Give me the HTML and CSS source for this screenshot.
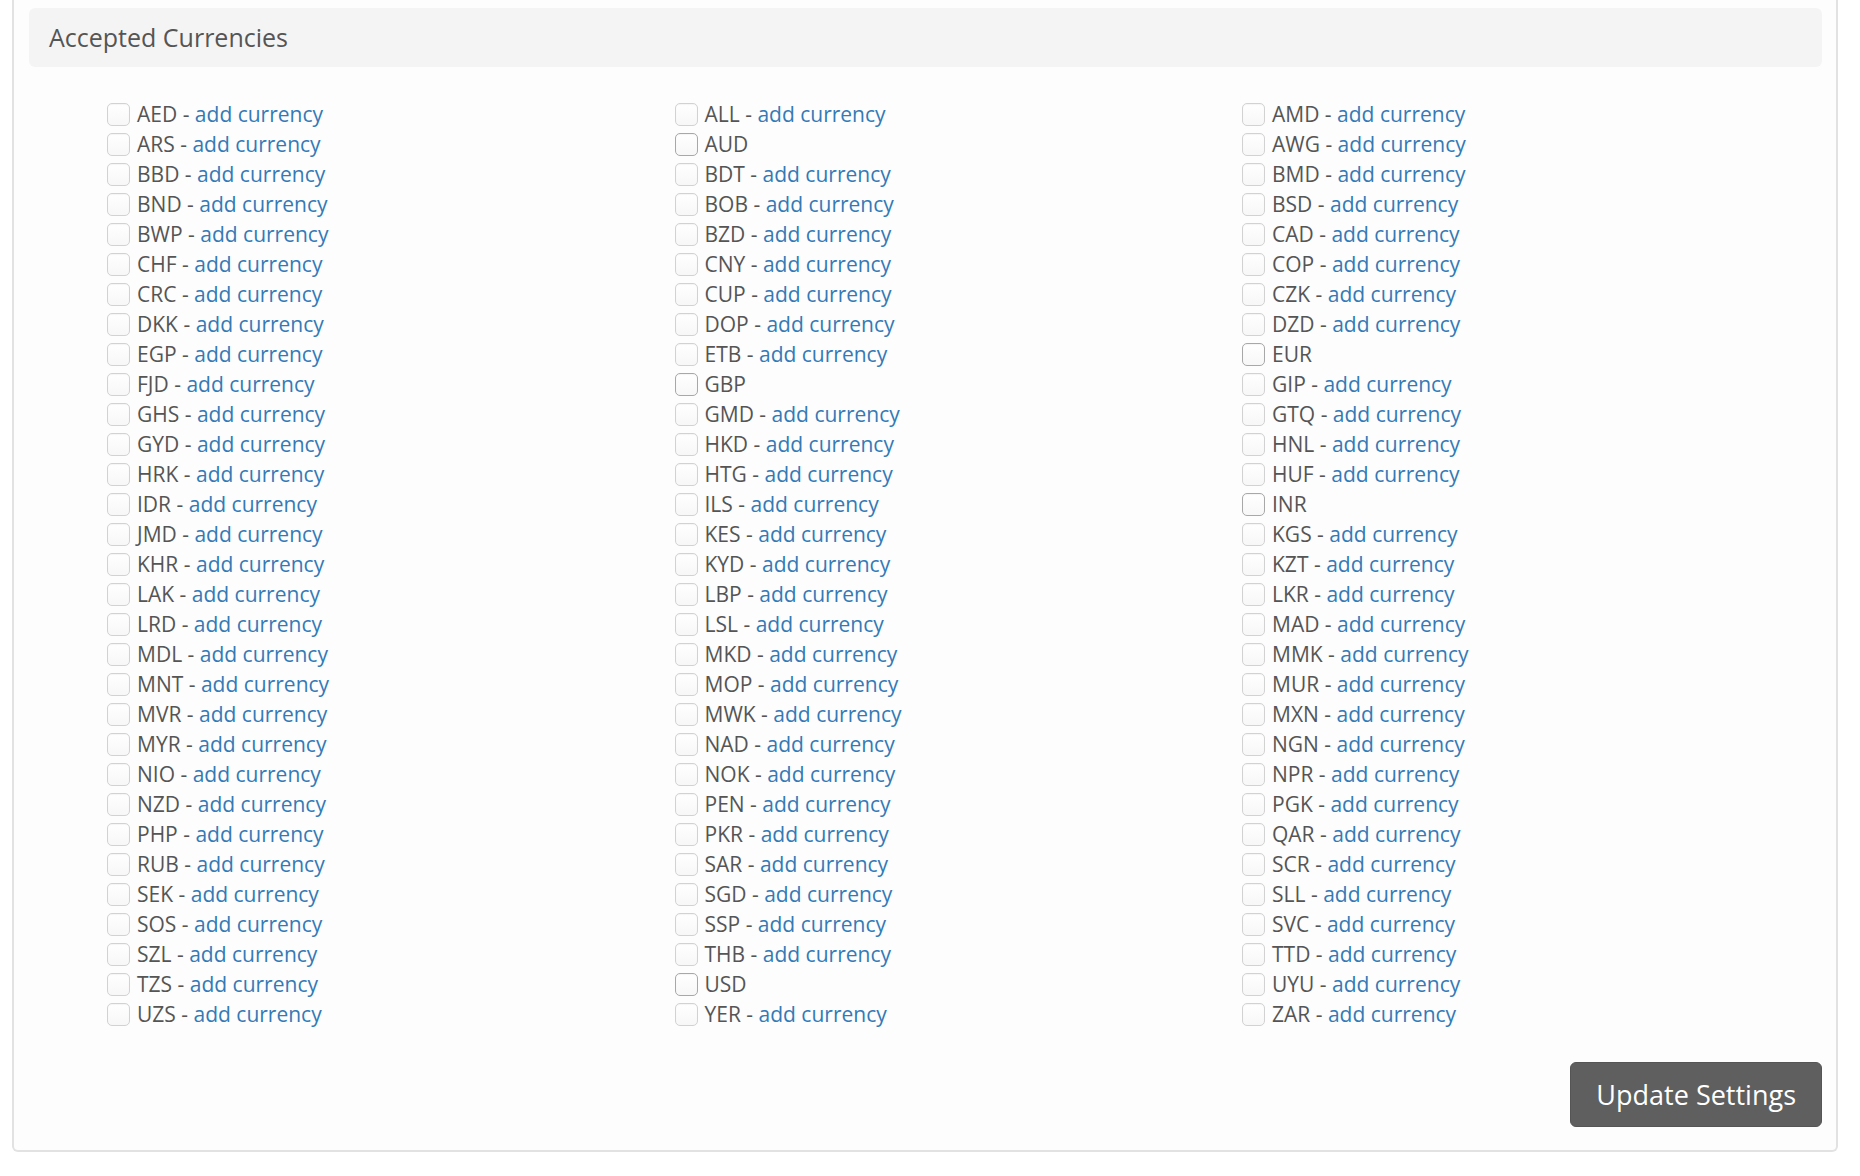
FILE: index.html
```html
<!DOCTYPE html>
<html lang="en">

<head>
    <meta charset="UTF-8">
    <title>Accepted Currencies</title>
    <link rel="stylesheet" href="styles.css">
</head>

<body>
    <div class="panel">
        <div class="panel-heading">Accepted Currencies</div>
        <form class="currency-form">
            <ul class="currency-list" id="currency-list"></ul>
            <div class="form-actions">
                <button type="submit" class="btn-update">Update Settings</button>
            </div>
        </form>
    </div>

    <script>
        // currencies already enabled have no "add currency" link
        const enabled = ['AUD', 'EUR', 'GBP', 'INR', 'USD'];
        const codes = [
            'AED', 'ALL', 'AMD', 'ARS', 'AUD', 'AWG', 'BBD', 'BDT', 'BMD', 'BND', 'BOB', 'BSD',
            'BWP', 'BZD', 'CAD', 'CHF', 'CNY', 'COP', 'CRC', 'CUP', 'CZK', 'DKK', 'DOP', 'DZD',
            'EGP', 'ETB', 'EUR', 'FJD', 'GBP', 'GIP', 'GHS', 'GMD', 'GTQ', 'GYD', 'HKD', 'HNL',
            'HRK', 'HTG', 'HUF', 'IDR', 'ILS', 'INR', 'JMD', 'KES', 'KGS', 'KHR', 'KYD', 'KZT',
            'LAK', 'LBP', 'LKR', 'LRD', 'LSL', 'MAD', 'MDL', 'MKD', 'MMK', 'MNT', 'MOP', 'MUR',
            'MVR', 'MWK', 'MXN', 'MYR', 'NAD', 'NGN', 'NIO', 'NOK', 'NPR', 'NZD', 'PEN', 'PGK',
            'PHP', 'PKR', 'QAR', 'RUB', 'SAR', 'SCR', 'SEK', 'SGD', 'SLL', 'SOS', 'SSP', 'SVC',
            'SZL', 'THB', 'TTD', 'TZS', 'USD', 'UYU', 'UZS', 'YER', 'ZAR'
        ];

        const list = document.getElementById('currency-list');
        codes.forEach(code => {
            const li = document.createElement('li');
            const isEnabled = enabled.includes(code);
            li.innerHTML = '<label><input type="checkbox" name="currency[]" value="' + code + '"' +
                (isEnabled ? ' class="enabled"' : '') + '><span class="code">' + code + '</span></label>' +
                (isEnabled ? '' : '<span class="sep"> - </span><a href="#">add currency</a>');
            list.appendChild(li);
        });
    </script>
</body>

</html>
```

FILE: styles.css
```css
body {
    margin: 0;
    background-color: #fff;
    font-family: "Open Sans", "Liberation Sans", sans-serif;
    color: #555;
}

.panel {
    margin: 0 22px 0 12px;
    padding: 8px 14px 23px 15px;
    background-color: #fdfdfd;
    border: 2px solid #e2e2e2;
    border-top: 0;
    border-radius: 0 0 6px 6px;
}

.panel-heading {
    height: 59px;
    display: flex;
    align-items: center;
    padding-left: 20px;
    padding-bottom: 2px;
    box-sizing: border-box;
    background-color: #f4f4f4;
    border-radius: 6px;
    font-size: 25px;
    color: #555;
}

/* currency grid */
.currency-list {
    list-style: none;
    margin: 32px 0 0 78px;
    padding: 0;
    display: grid;
    grid-template-columns: repeat(3, 567.5px);
}

.currency-list li {
    height: 30px;
    font-size: 21px;
    white-space: nowrap;
    display: flex;
    align-items: center;
}

.currency-list label {
    display: flex;
    align-items: center;
}

.currency-list input[type="checkbox"] {
    appearance: none;
    -webkit-appearance: none;
    width: 23px;
    height: 23px;
    margin: 0 7px 0 0;
    border: 1px solid #d2d2d2;
    border-radius: 5px;
    background: linear-gradient(#fff, #f7f7f7);
    box-shadow: inset 0 1px 1px rgba(0, 0, 0, 0.04);
}

.currency-list input.enabled {
    border-color: #a8a8a8;
}

.currency-list .sep {
    white-space: pre;
}

.currency-list li a {
    color: #337ab7;
    text-decoration: none;
}

/* submit */
.form-actions {
    display: flex;
    justify-content: flex-end;
    margin-top: 33px;
}

.btn-update {
    height: 65px;
    padding: 0 25px;
    background-color: #5f5f5f;
    border: 1px solid #555;
    border-radius: 6px;
    color: #fff;
    font-family: "Open Sans", "Liberation Sans", sans-serif;
    font-size: 27px;
    cursor: pointer;
}
```
